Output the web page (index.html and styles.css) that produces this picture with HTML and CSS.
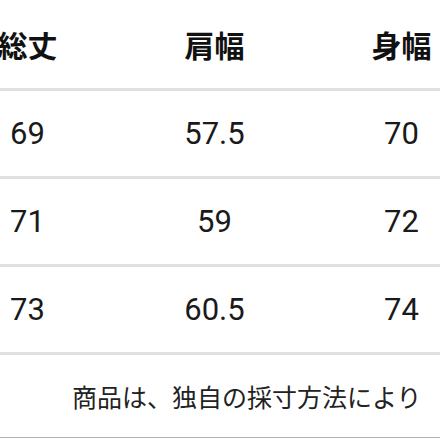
FILE: index.html
```html
<!DOCTYPE html>
<html lang="ja">
<head>
<meta charset="utf-8">
<link rel="stylesheet" href="styles.css">
</head>
<body>
<div class="sheet">
  <div class="row head">
    <div class="cell">総丈</div>
    <div class="cell">肩幅</div>
    <div class="cell">身幅</div>
  </div>
  <div class="row">
    <div class="cell">69</div>
    <div class="cell">57.5</div>
    <div class="cell">70</div>
  </div>
  <div class="row">
    <div class="cell">71</div>
    <div class="cell">59</div>
    <div class="cell">72</div>
  </div>
  <div class="row">
    <div class="cell">73</div>
    <div class="cell">60.5</div>
    <div class="cell">74</div>
  </div>
  <div class="note">
    <p class="note-text">商品は、独自の採寸方法により</p>
  </div>
</div>
</body>
</html>
```
FILE: styles.css
```css
html, body {
  margin: 0;
  padding: 0;
  background: #fff;
  overflow: hidden;
}
body {
  width: 440px;
  height: 440px;
  font-family: Roboto, "Noto Sans CJK JP", sans-serif;
  color: #1a1a1a;
}
.sheet {
  width: 561px;
  margin-left: -66px;
}
.row {
  display: grid;
  grid-template-columns: 187px 187px 187px;
  height: 85px;
  border-bottom: 3px solid #e0e0e0;
  align-items: center;
}
.row.head {
  height: 88px;
  font-family: "Noto Sans CJK JP", sans-serif;
  font-weight: 700;
  color: #111;
}
.cell {
  text-align: center;
  font-size: 31px;
  line-height: 1;
}
.head .cell {
  font-size: 30px;
}
.note {
  height: 82px;
  border-bottom: 1px solid #b0b0b0;
  display: flex;
  align-items: center;
  padding-left: 138px;
  white-space: nowrap;
}
.note-text {
  margin: 0;
  font-family: "Noto Sans CJK JP", sans-serif;
  font-size: 25px;
  color: #222;
}
```
